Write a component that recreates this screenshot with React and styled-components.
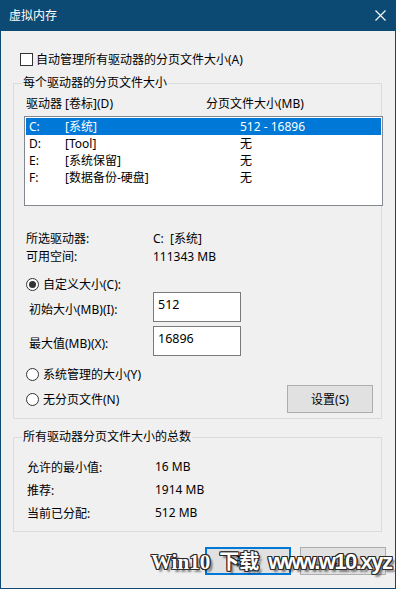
import React from 'react'
import styled, { createGlobalStyle } from 'styled-components'

const GlobalStyle = createGlobalStyle`
	html, body {
		margin: 0;
		padding: 0;
		background: #f0f0f0;
	}
	* {
		box-sizing: border-box;
	}
`

const FONT = `"Segoe UI", "Noto Sans", "Noto Sans CJK SC", sans-serif`

const Window = styled.div`
	position: relative;
	width: 396px;
	height: 589px;
	background: #f0f0f0;
	border: 1px solid #0d4a73;
	border-top: none;
	font-family: ${FONT};
	font-size: 12px;
	color: #000;
	display: flex;
	flex-direction: column;
	overflow: hidden;
`

const TitleBar = styled.div`
	height: 31px;
	margin: 0 -1px;
	background: #0d4a73;
	color: #fff;
	display: flex;
	align-items: center;
	justify-content: space-between;
	padding: 0 10px 0 9px;
	font-size: 12px;
	line-height: 16px;
	flex: none;
`

const Body = styled.div`
	display: flex;
	flex-direction: column;
	padding: 0 12px 0 12px;
`

const CheckRow = styled.label`
	display: flex;
	align-items: center;
	height: 16px;
	margin-top: 20px;
	margin-left: 7px;
	gap: 3px;
`

const CheckBox = styled.span`
	width: 13px;
	height: 13px;
	border: 1px solid #333;
	background: #fff;
	flex: none;
`

const Group = styled.fieldset`
	margin: 0;
	min-width: 0;
	width: 369px;
	border: 1px solid #dcdcdc;
	padding: ${({ $pad }) => $pad};
	margin-top: ${({ $top }) => $top}px;
`

const Legend = styled.legend`
	padding: 0 1px;
	margin-left: -2px;
	line-height: 16px;
	font-size: 12px;
`

const ColumnHead = styled.div`
	display: flex;
	height: 16px;
	line-height: 16px;
	margin-left: 2px;
	margin-bottom: 4px;
`

const HeadCell = styled.span`
	width: ${({ $w }) => $w}px;
	flex: none;
`

const ListBox = styled.div`
	width: 359px;
	height: 90px;
	background: #fff;
	border: 1px solid #828790;
	padding: 1px;
`

const ListRow = styled.div`
	display: flex;
	height: 17px;
	line-height: 17px;
	padding-left: 3px;
	margin-right: ${({ $sel }) => ($sel ? '0' : '0')};
	width: 355px;
	background: ${({ $sel }) => ($sel ? '#0078d7' : 'transparent')};
	color: ${({ $sel }) => ($sel ? '#fff' : '#000')};
`

const Cell = styled.span`
	width: ${({ $w }) => $w}px;
	flex: none;
	white-space: nowrap;
`

const InfoRow = styled.div`
	display: flex;
	height: ${({ $h }) => $h}px;
	align-items: center;
	margin-left: ${({ $indent }) => $indent}px;
	margin-top: ${({ $top = 0 }) => $top}px;
`

const InfoLabel = styled.span`
	width: ${({ $w }) => $w}px;
	flex: none;
`

const RadioRow = styled.label`
	display: flex;
	align-items: center;
	gap: 4px;
	height: ${({ $h = 18 }) => $h}px;
	margin-left: 2px;
	margin-top: ${({ $top = 0 }) => $top}px;
`

const RadioDot = styled.span`
	width: 13px;
	height: 13px;
	border-radius: 50%;
	border: 1px solid #333;
	background: #fff;
	flex: none;
	display: flex;
	align-items: center;
	justify-content: center;
	&::after {
		content: '';
		display: ${({ $on }) => ($on ? 'block' : 'none')};
		width: 7px;
		height: 7px;
		border-radius: 50%;
		background: #333;
	}
`

const FieldRow = styled.div`
	display: flex;
	align-items: center;
	margin-left: 5px;
	margin-top: ${({ $top = 0 }) => $top}px;
	height: 30px;
`

const FieldLabel = styled.span`
	width: 124px;
	flex: none;
	padding-top: 3px;
`

const TextBox = styled.div`
	width: 88px;
	height: 30px;
	border: 1px solid #7a7a7a;
	background: #fff;
	padding: 2px 0 0 4px;
	line-height: 20px;
	font-size: 12.5px;
`

const LastRow = styled.div`
	display: flex;
	align-items: center;
	justify-content: space-between;
	margin-top: 2px;
	padding-right: 0;
`

const Button = styled.div`
	width: 86px;
	height: 28px;
	display: flex;
	align-items: center;
	justify-content: center;
	background: #e1e1e1;
	border: ${({ $primary }) => ($primary ? '2px solid #0078d7' : '1px solid #adadad')};
	font-size: 12px;
`

const Footer = styled.div`
	display: flex;
	justify-content: flex-end;
	gap: 9px;
	margin-top: 15px;
	padding-right: 9px;
`

const Watermark = styled.div`
	position: absolute;
	left: 150px;
	top: 551px;
	display: flex;
	align-items: baseline;
	gap: 9px;
	color: #fff;
	font-weight: bold;
	white-space: nowrap;
	text-shadow:
		-1px -1px 0 #2a2a2a, 1px -1px 0 #2a2a2a, -1px 1px 0 #2a2a2a, 1px 1px 0 #2a2a2a,
		0 1px 0 #2a2a2a, 0 -1px 0 #2a2a2a, 1px 0 0 #2a2a2a, -1px 0 0 #2a2a2a,
		3px 3px 2px rgba(0, 0, 0, 0.45);
	pointer-events: none;
`

const MarkPart = styled.span`
	font-family: ${({ $family }) => $family};
	font-size: ${({ $size }) => $size}px;
	letter-spacing: ${({ $ls = 0 }) => $ls}px;
	line-height: 1;
`

const CloseIcon = () => (
	<svg width="11" height="11" viewBox="0 0 11 11">
		<path d="M0.5 0.5 L10.5 10.5 M10.5 0.5 L0.5 10.5" stroke="#fff" strokeWidth="1.1" fill="none" />
	</svg>
)

const drives = [
	{ letter: 'C:', label: '[系统]', size: '512 - 16896', selected: true },
	{ letter: 'D:', label: '[Tool]', size: '无' },
	{ letter: 'E:', label: '[系统保留]', size: '无' },
	{ letter: 'F:', label: '[数据备份-硬盘]', size: '无' },
]

const totals = [
	['允许的最小值:', '16 MB'],
	['推荐:', '1914 MB'],
	['当前已分配:', '512 MB'],
]

export default function App() {
	return (
		<>
			<GlobalStyle />
			<Window>
				<TitleBar>
					<span>虚拟内存</span>
					<CloseIcon />
				</TitleBar>
				<Body>
					<CheckRow>
						<CheckBox />
						<span>自动管理所有驱动器的分页文件大小(A)</span>
					</CheckRow>

					<Group $top={8} $pad="5px 8px 5px 10px">
						<Legend>每个驱动器的分页文件大小</Legend>
						<ColumnHead>
							<HeadCell $w={180}>驱动器 [卷标](D)</HeadCell>
							<HeadCell $w={120}>分页文件大小(MB)</HeadCell>
						</ColumnHead>
						<ListBox>
							{drives.map((d) => (
								<ListRow key={d.letter} $sel={d.selected}>
									<Cell $w={36}>{d.letter}</Cell>
									<Cell $w={175}>{d.label}</Cell>
									<Cell $w={120}>{d.size}</Cell>
								</ListRow>
							))}
						</ListBox>

						<InfoRow $h={18} $indent={2} $top={23}>
							<InfoLabel $w={127}>所选驱动器:</InfoLabel>
							<span>C:&nbsp;&nbsp;[系统]</span>
						</InfoRow>
						<InfoRow $h={18} $indent={2}>
							<InfoLabel $w={127}>可用空间:</InfoLabel>
							<span>111343 MB</span>
						</InfoRow>

						<RadioRow $h={16} $top={11}>
							<RadioDot $on />
							<span>自定义大小(C):</span>
						</RadioRow>
						<FieldRow>
							<FieldLabel>初始大小(MB)(I):</FieldLabel>
							<TextBox>512</TextBox>
						</FieldRow>
						<FieldRow $top={4}>
							<FieldLabel>最大值(MB)(X):</FieldLabel>
							<TextBox>16896</TextBox>
						</FieldRow>

						<RadioRow $top={9}>
							<RadioDot />
							<span>系统管理的大小(Y)</span>
						</RadioRow>
						<LastRow>
							<RadioRow>
								<RadioDot />
								<span>无分页文件(N)</span>
							</RadioRow>
							<Button>设置(S)</Button>
						</LastRow>
					</Group>

					<Group $top={10} $pad="10px 8px 7px 10px">
						<Legend>所有驱动器分页文件大小的总数</Legend>
						{totals.map(([k, v]) => (
							<InfoRow key={k} $h={23} $indent={3}>
								<InfoLabel $w={128}>{k}</InfoLabel>
								<span>{v}</span>
							</InfoRow>
						))}
					</Group>
				</Body>
				<Footer>
					<Button $primary>确定</Button>
					<Button>取消</Button>
				</Footer>
				<Watermark>
					<MarkPart $family={`"Liberation Serif", serif`} $size={21}>Win10</MarkPart>
					<MarkPart $family={`"Noto Sans CJK SC", sans-serif`} $size={20}>下载</MarkPart>
					<MarkPart $family={`"Liberation Sans", sans-serif`} $size={22} $ls={-1.5}>www.w10.xyz</MarkPart>
				</Watermark>
			</Window>
		</>
	)
}
